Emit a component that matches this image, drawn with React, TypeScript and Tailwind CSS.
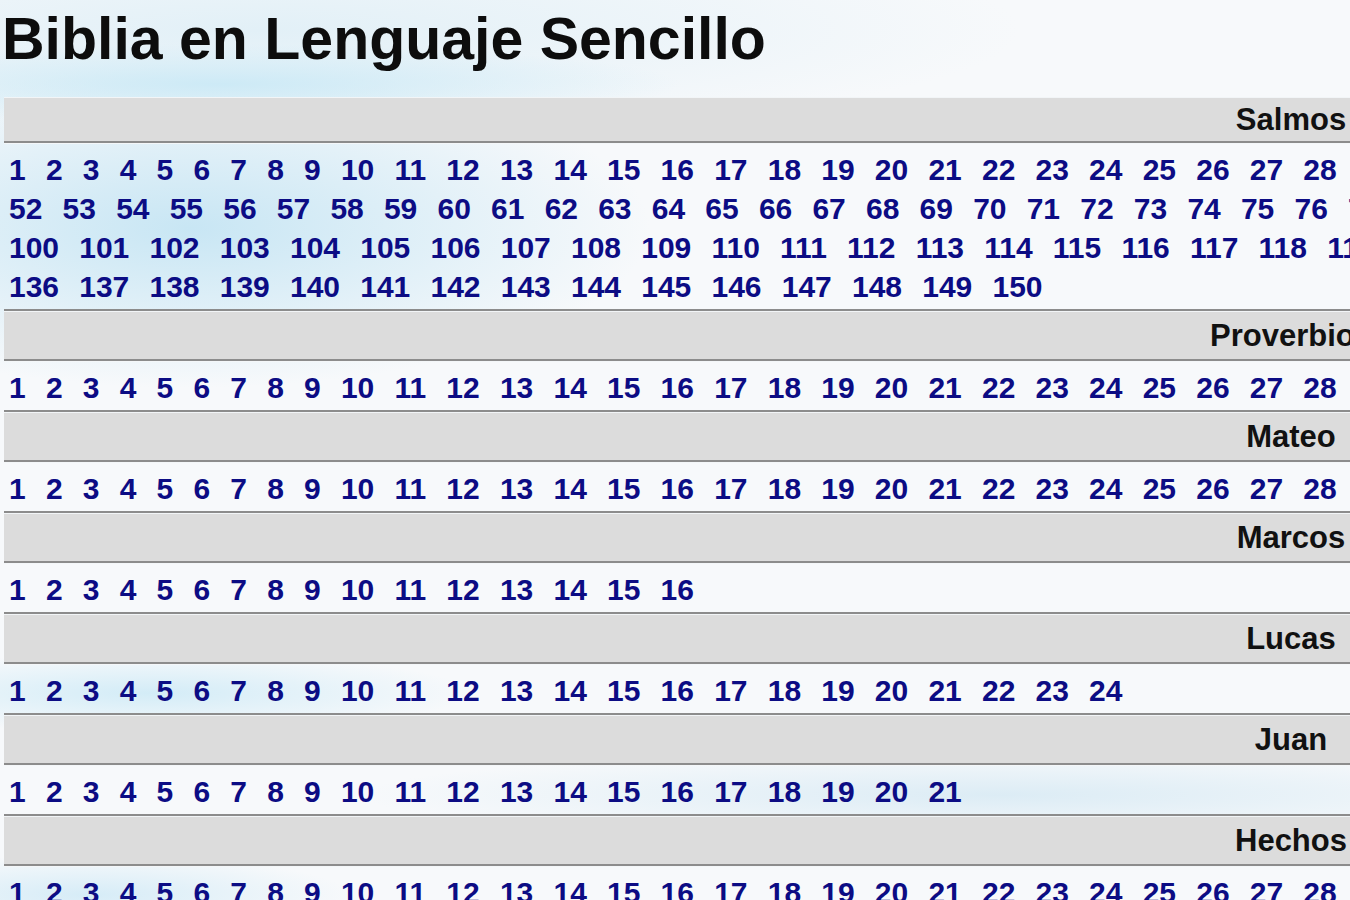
const books = [
  { name: 'Salmos', chapters: 150, breaks: [51, 99, 135] },
  { name: 'Proverbios', chapters: 31, breaks: [] },
  { name: 'Mateo', chapters: 28, breaks: [] },
  { name: 'Marcos', chapters: 16, breaks: [] },
  { name: 'Lucas', chapters: 24, breaks: [] },
  { name: 'Juan', chapters: 21, breaks: [] },
  { name: 'Hechos', chapters: 28, breaks: [] },
]

// split 1..chapters into lines ending at the given chapter numbers
function toLines(chapters: number, breaks: number[]) {
  const lines: number[][] = []
  let start = 1
  for (const end of [...breaks, chapters]) {
    lines.push(Array.from({ length: end - start + 1 }, (_, i) => start + i))
    start = end + 1
  }
  return lines
}

function BookSection({
  name,
  chapters,
  breaks,
  first,
}: {
  name: string
  chapters: number
  breaks: number[]
  first: boolean
}) {
  return (
    <>
      <div
        className={`flex items-center justify-center border-t border-t-[#f2f5f7] border-b-2 border-b-[#8c8c8c] bg-[#dcdcdc] ${
          first ? 'h-[46px]' : 'h-[50.5px]'
        }`}
      >
        <span className="text-[31px] leading-none font-bold text-[#111]">{name}</span>
      </div>
      <div className="border-t border-t-[#f4f7f9] border-b-2 border-b-[#8c8c8c] px-[5px] pt-[5.5px] pb-[3px]">
        {toLines(chapters, breaks).map((line, li) => (
          <div key={li} className="flex gap-x-[20.2px] whitespace-nowrap">
            {line.map((n) => (
              <a key={n} href="#" className="text-[30px] leading-[39px] font-bold text-[#0c0c84]">
                {n}
              </a>
            ))}
          </div>
        ))}
      </div>
    </>
  )
}

export default function App() {
  return (
    <main className="h-screen w-screen overflow-hidden bg-[#f7f9fb] bg-[radial-gradient(ellipse_460px_40px_at_220px_84px,#cdeaf6,transparent),radial-gradient(ellipse_760px_110px_at_260px_30px,#e2f0f7,transparent),radial-gradient(ellipse_460px_160px_at_190px_228px,#c8e6f4,transparent),radial-gradient(ellipse_320px_40px_at_150px_693px,#d3ecf7,transparent),radial-gradient(ellipse_640px_44px_at_1000px_795px,#dcecf5,transparent),radial-gradient(ellipse_260px_40px_at_90px_895px,#d6ecf7,transparent)] font-['Liberation_Sans',Arial,sans-serif]">
      <div className="h-[97px] pt-[10px] pl-[2px]">
        <h1 className="text-[59px] leading-none font-bold text-[#0d0d0d]">Biblia en Lenguaje Sencillo</h1>
      </div>
      <div className="ml-[4px] w-[2574px]">
        {books.map((b, i) => (
          <BookSection key={b.name} name={b.name} chapters={b.chapters} breaks={b.breaks} first={i === 0} />
        ))}
      </div>
    </main>
  )
}
